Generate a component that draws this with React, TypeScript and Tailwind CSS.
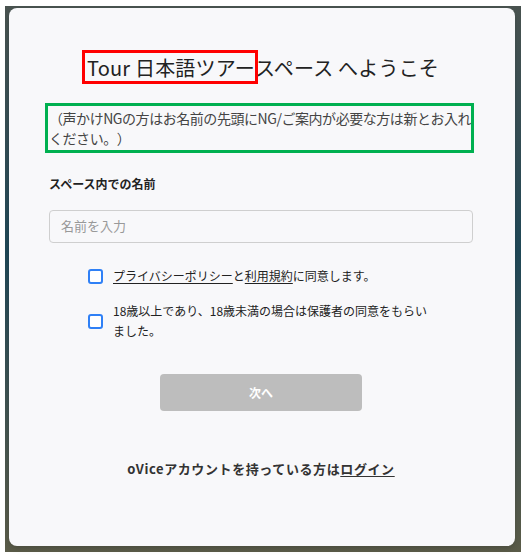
import React from 'react';

const font = { fontFamily: '"Noto Sans CJK JP", "Noto Sans", sans-serif' };

const Checkbox = () => (
  <span className="w-[15px] h-[15px] shrink-0 rounded-[3px] border-2 border-[#2f80f6] bg-white" />
);

const App = () => {
  return (
    <div className="w-[525px] h-[558px] bg-white pl-[5px] pt-[6px] [text-spacing-trim:space-all]" style={font}>
      <div className="w-[516px] h-[546px] bg-gradient-to-b from-[#48524f] via-[#1f4756] via-45% to-[#5a5b48] pl-[4px] pt-[2px]">
        <div className="w-[506px] h-[538px] bg-[#f8f8fa] rounded-[8px] shadow-md flex flex-col pl-[40px] pr-[42px] pt-[46px] text-[#333]">
          <h1 className="pl-[4px] text-center text-[20px] leading-[28px] text-[#222] font-normal tracking-[0.2px]">
            <span className="relative">
              Tour 日本語ツアー
              <span className="absolute -left-[5px] -right-[3px] -top-[3px] -bottom-[2px] border-[3px] border-[#ff0000]" />
            </span>
            スペース へようこそ
          </h1>

          <p className="relative mt-[26px] -mr-[10px] text-[14px] leading-[20px] text-[#444] tracking-[-0.45px]">
            （声かけNGの方はお名前の先頭にNG/ご案内が必要な方は新とお入れください。）
            <span className="absolute -left-[4px] right-[9px] -top-[5px] -bottom-[5px] border-[3px] border-[#00b050]" />
          </p>

          <label className="mt-[27px] text-[12px] leading-[18px] font-bold text-[#222]">スペース内での名前</label>

          <input
            className="mt-[17px] h-[33px] w-full rounded-[4px] border border-[#cfcfcf] bg-[#f8f8fa] px-[11px] pb-[2px] text-[13px] placeholder:text-[#999] outline-none"
            placeholder="名前を入力"
          />

          <div className="flex flex-col pl-[39px] pr-[36px]">
            <div className="mt-[23px] flex items-center gap-[10px] text-[12px] leading-[20px] text-[#222]">
              <Checkbox />
              <span>
                <span className="underline underline-offset-2">プライバシーポリシー</span>と
                <span className="underline underline-offset-2">利用規約</span>に同意します。
              </span>
            </div>
            <div className="mt-[15px] flex items-center gap-[10px] text-[12px] leading-[20px] text-[#222]">
              <Checkbox />
              <span>18歳以上であり、18歳未満の場合は保護者の同意をもらいました。</span>
            </div>
          </div>

          <button className="mt-[33px] self-center w-[202px] h-[37px] rounded-[4px] bg-[#bdbdbd] text-white text-[12px] font-bold">
            次へ
          </button>

          <p className="mt-[48px] text-center text-[13px] leading-[20px] font-bold text-[#333] tracking-[0.6px]">
            oViceアカウントを持っている方は<span className="underline underline-offset-2">ログイン</span>
          </p>
        </div>
      </div>
    </div>
  );
};

export default App;
